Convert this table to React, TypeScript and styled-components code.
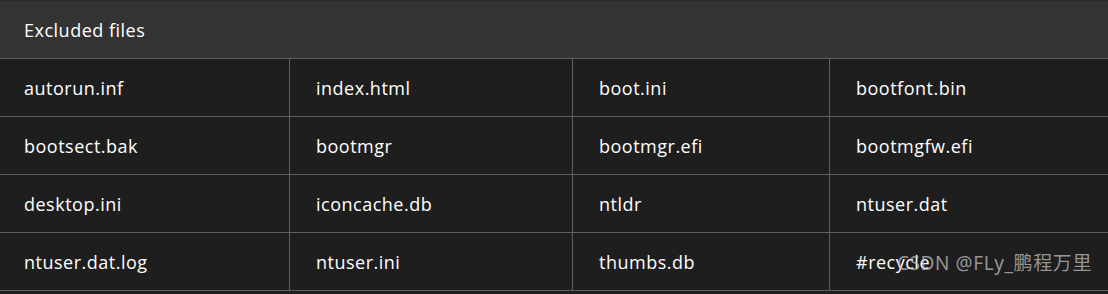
import React from "react";
import styled, { createGlobalStyle } from "styled-components";

const Global = createGlobalStyle`
  html, body { margin: 0; padding: 0; background: #1e1e1e; }
  body { font-family: "Open Sans", "Noto Sans", sans-serif; font-variant-ligatures: none; }
`;

const Wrap = styled.div`
  position: relative;
  width: 1108px;
  height: 294px;
  background: #1e1e1e;
  border-top: 1px solid #2a2a2a;
  box-sizing: border-box;
  overflow: hidden;
`;

const Header = styled.div`
  height: 57px;
  background: #333333;
  border-bottom: 1px solid #5f5f5f;
  display: flex;
  align-items: center;
  padding-left: 24px;
  color: #ffffff;
  font-size: 18px;
  letter-spacing: 0.5px;
`;

const Grid = styled.div`
  display: grid;
  grid-template-columns: 290px 283px 257px 1fr;
`;

const Cell = styled.div`
  height: 58px;
  box-sizing: border-box;
  display: flex;
  align-items: center;
  padding-left: 26px;
  color: #ffffff;
  font-size: 18px;
  letter-spacing: 0.5px;
  border-bottom: 1px solid #5f5f5f;
  border-right: 1px solid #5f5f5f;
  &:nth-child(4n) { border-right: none; }
  &:nth-child(4n + 1) { padding-left: 24px; }
`;

const Watermark = styled.div`
  position: absolute;
  right: 16px;
  bottom: 18px;
  color: rgba(190, 190, 190, 0.75);
  font-family: "Noto Sans", "Noto Sans CJK SC", sans-serif;
  font-size: 19px;
  letter-spacing: 0.6px;
  pointer-events: none;
`;

const files = [
  "autorun.inf", "index.html", "boot.ini", "bootfont.bin",
  "bootsect.bak", "bootmgr", "bootmgr.efi", "bootmgfw.efi",
  "desktop.ini", "iconcache.db", "ntldr", "ntuser.dat",
  "ntuser.dat.log", "ntuser.ini", "thumbs.db", "#recycle",
];

export default function App() {
  return (
    <Wrap>
      <Global />
      <Header>Excluded files</Header>
      <Grid>
        {files.map((f) => (
          <Cell key={f}>{f}</Cell>
        ))}
      </Grid>
      <Watermark>CSDN @FLy_鹏程万里</Watermark>
    </Wrap>
  );
}
